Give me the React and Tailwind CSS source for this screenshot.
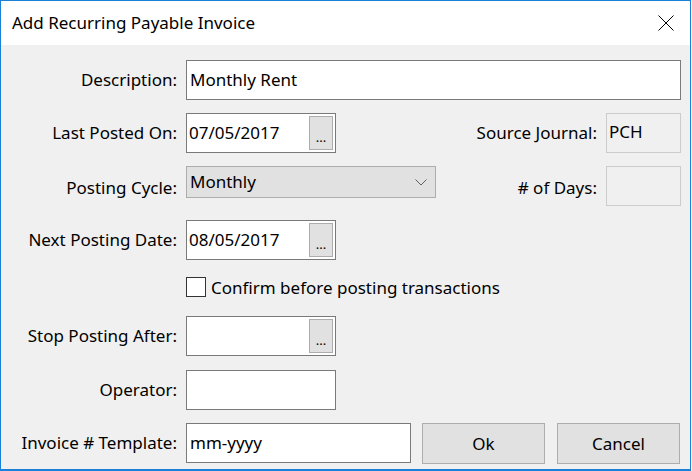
import React from "react";

const font = { fontFamily: '"Noto Sans", "Open Sans", sans-serif' };

function Label({ children, w = "w-[176px]" }) {
  return (
    <div className={`${w} shrink-0 text-right text-[17px] text-black`}>{children}</div>
  );
}

function DateInput({ value }) {
  return (
    <div className="ml-[9px] flex h-[40px] w-[150px] items-center border border-[#7a7a7a] bg-white pl-[2px] pr-[2px]">
      <div className="flex-1 text-[17px] text-black">{value}</div>
      <div className="flex h-[34px] w-[24px] items-center justify-center border border-[#adadad] bg-[#e1e1e1] text-[13px] leading-none text-black">
        <span className="mt-[8px]">...</span>
      </div>
    </div>
  );
}

export default function App() {
  return (
    <div
      className="h-[471px] w-[692px] overflow-hidden bg-white"
      style={font}
    >
      <div className="flex h-[471px] w-[691px] flex-col border-x border-t border-b-2 border-[#1a80d8] bg-[#f0f0f0]">
        {/* Title bar */}
        <div className="flex h-[44px] shrink-0 items-center justify-between bg-white pl-[11px] pr-[16px]">
          <div className="text-[17px] text-black">Add Recurring Payable Invoice</div>
          <svg width="16" height="16" viewBox="0 0 16 16" className="mb-[1px]">
            <path d="M0.5 0.5 L15.5 15.5 M15.5 0.5 L0.5 15.5" stroke="#000" strokeWidth="1" fill="none" />
          </svg>
        </div>

        <div className="flex flex-col pr-[9px] pt-[15px]">
          {/* Description */}
          <div className="flex h-[40px] items-center">
            <Label>Description:</Label>
            <div className="ml-[9px] flex h-[40px] flex-1 items-center border border-[#7a7a7a] bg-white pl-[3px] text-[17px] text-black">
              Monthly Rent
            </div>
          </div>

          {/* Last Posted On */}
          <div className="mt-[13px] flex h-[40px] items-center">
            <Label>Last Posted On:</Label>
            <DateInput value="07/05/2017" />
            <div className="flex-1" />
            <div className="text-[17px] text-black">Source Journal:</div>
            <div className="ml-[9px] flex h-[40px] w-[75px] items-start border border-[#cccccc] pl-[2px] pt-[7px] text-[17px] leading-[22px] text-black">
              PCH
            </div>
          </div>

          {/* Posting Cycle */}
          <div className="mt-[13px] flex h-[40px] items-center">
            <div className="pt-[3px]">
              <Label>Posting Cycle:</Label>
            </div>
            <div className="ml-[9px] flex h-[32px] w-[250px] items-center self-start border border-[#adadad] bg-[#e1e1e1] pl-[3px] pr-[8px]">
              <div className="flex-1 text-[17px] text-black">Monthly</div>
              <svg width="12" height="7" viewBox="0 0 12 7">
                <path d="M0.5 0.5 L6 6 L11.5 0.5" stroke="#606060" strokeWidth="1" fill="none" />
              </svg>
            </div>
            <div className="flex-1" />
            <div className="pt-[3px] text-[17px] text-black">{"# of Days:"}</div>
            <div className="ml-[9px] h-[40px] w-[75px] border border-[#cccccc]" />
          </div>

          {/* Next Posting Date */}
          <div className="mt-[14px] flex h-[40px] items-center">
            <Label>Next Posting Date:</Label>
            <DateInput value="08/05/2017" />
          </div>

          {/* Checkbox */}
          <div className="mt-[17px] flex h-[20px] items-center">
            <div className="ml-[185px] h-[20px] w-[20px] border border-[#333333] bg-white" />
            <div className="ml-[5px] pt-[2px] text-[17px] text-black">Confirm before posting transactions</div>
          </div>

          {/* Stop Posting After */}
          <div className="mt-[19px] flex h-[40px] items-center">
            <Label>Stop Posting After:</Label>
            <DateInput value="" />
          </div>

          {/* Operator */}
          <div className="mt-[14px] flex h-[40px] items-center">
            <Label>Operator:</Label>
            <div className="ml-[9px] h-[40px] w-[150px] border border-[#7a7a7a] bg-white" />
          </div>

          {/* Invoice Template */}
          <div className="mt-[13px] flex h-[41px] items-start">
            <div className="flex h-[40px] items-center">
              <Label>Invoice # Template:</Label>
            </div>
            <div className="ml-[9px] flex h-[40px] w-[225px] items-center border border-[#7a7a7a] bg-white pl-[3px] text-[17px] text-black">
              mm-yyyy
            </div>
            <div className="ml-[11px] flex h-[41px] w-[123px] items-center justify-center border border-[#adadad] bg-[#e1e1e1] text-[17px] text-black">
              Ok
            </div>
            <div className="ml-[12px] flex h-[41px] w-[123px] items-center justify-center border border-[#adadad] bg-[#e1e1e1] text-[17px] text-black">
              Cancel
            </div>
          </div>
        </div>
      </div>
    </div>
  );
}
